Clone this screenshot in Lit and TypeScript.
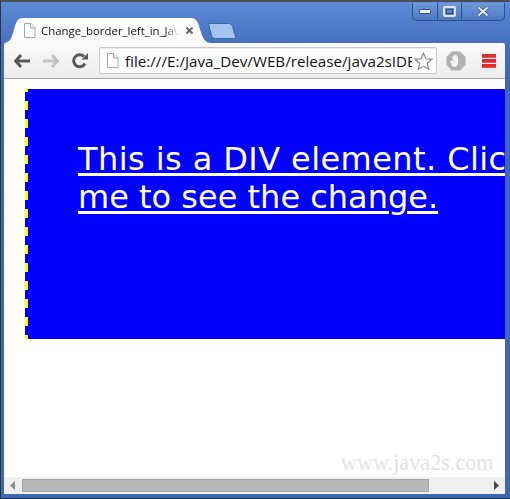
import { LitElement, html, svg, css } from "lit";
import { customElement } from "lit/decorators.js";

@customElement("app-root")
export class AppRoot extends LitElement {
  static styles = css`
    :host { display: block; width: 510px; height: 499px; overflow: hidden; }
    * { box-sizing: border-box; }
    .window {
      width: 510px; height: 499px; display: flex; flex-direction: column;
      padding: 1px 5px 4px 3px;
      border-top: 2px solid #4a4e55; border-left: 1px solid #30343a; border-bottom: 1px solid #20304a;
      background: linear-gradient(#5f8ad6 0, #4470c0 42px, #3c68b4 80px, #3c68b4 100%);
      position: relative;
    }
    .strip { height: 40px; display: flex; align-items: flex-end; flex: none; position: relative; }
    .tab { position: relative; width: 206px; height: 25px; margin-left: 0; display: flex; align-items: center; padding: 0 0 0 19px; flex: none; }
    .tab-bg { position: absolute; left: 0; top: 0; width: 206px; height: 25px; }
    .tab-page { position: relative; width: 13px; height: 15px; flex: none; }
    .tab-title {
      position: relative; font: 11.4px "Open Sans", sans-serif; color: #111; margin-left: 5px; width: 138px;
      white-space: nowrap; overflow: hidden;
      -webkit-mask-image: linear-gradient(to right, #000 124px, transparent 138px);
    }
    .tab-x { position: relative; width: 9px; height: 9px; margin-left: 6px; flex: none; }
    .newtab { width: 34px; height: 16px; margin: 0 0 4px -4px; flex: none; position: relative; }
    .controls {
      position: absolute; right: 0; top: 0; width: 93px; height: 18px; display: flex;
      border: 1px solid #2c5088; border-top: none; border-radius: 0 0 5px 5px;
      background: linear-gradient(#7099da, #4c79c2);
    }
    .ctl { display: flex; align-items: center; justify-content: center; border-right: 1px solid #2c5088; flex: none; }
    .ctl:last-child { border-right: none; flex: 1; }
    .c1 { width: 25px; } .c2 { width: 24px; }
    .toolbar {
      height: 36px; flex: none; display: flex; align-items: center; padding: 0 0 0 10px;
      background: linear-gradient(#fbfbfb, #f1f1f1 60%, #ebebeb);
      border-bottom: 1px solid #a4a4a4; border-radius: 2px 2px 0 0;
    }
    .nav { width: 29px; height: 20px; flex: none; display: flex; align-items: center; }
    .nav.narrow { width: 27px; }
    .omni {
      width: 338px; height: 27px; flex: none; display: flex; align-items: center;
      background: #fff; border: 1px solid #c8c8c8; border-radius: 2px; padding-left: 6px;
      box-shadow: inset 0 1px 1px #eee;
    }
    .omni svg { flex: none; }
    .omni-text { font: 15.2px "Open Sans", sans-serif; color: #111; white-space: nowrap; overflow: hidden; width: 287px; margin-left: 6px; flex: none; }
    .star { margin-left: 2px; }
    .stop { margin-left: 9px; flex: none; }
    .menu { margin-left: 16px; flex: none; width: 14px; display: flex; flex-direction: column; gap: 1px; }
    .menu i { display: block; height: 4px; background: linear-gradient(#e2292b 70%, #ee7070); }
    .view { flex: 1; background: #fff; overflow: hidden; position: relative; min-height: 0; }
    .box {
      width: 580px; height: 250px; margin: 10px 0 0 21px; padding: 51px 50px 0 53px;
      background: linear-gradient(#ff0 0 9px, #00f 9px 18px) 0 -6px / 3px 18px repeat-y, #00f;
      color: #fff; font: 32px/38px "DejaVu Sans", sans-serif;
      text-decoration: underline; text-decoration-thickness: 3px; text-underline-offset: 3px;
    }
    .line1 { letter-spacing: 0.42px; }
    .wm { position: absolute; left: 337px; top: 371px; font: 22.2px "Liberation Serif", serif; color: #e3e3e3; white-space: nowrap; }
    .hbar { height: 17px; flex: none; background: #f0f0f0; display: flex; align-items: center; }
    .arrow { width: 18px; flex: none; display: flex; justify-content: center; }
    .thumb { width: 407px; height: 13px; background: #b8b8b8; border: 1px solid #a6a6a6; flex: none; }
    .track { flex: 1; }
  `;

  render() {
    const page = svg`<path d="M1.500.5h6.500l4 4v10h-10.500z" fill="#fff" stroke="#a8a8a8"/><path d="M7.500.5v4.500h4.500" fill="#eee" stroke="#a8a8a8"/>`;
    return html`
      <div class="window">
        <div class="strip">
          <div class="tab">
            <svg class="tab-bg" viewBox="0 0 206 25">
              <defs><linearGradient id="t" x1="0" y1="0" x2="0" y2="1"><stop offset="0" stop-color="#fff"/><stop offset="1" stop-color="#fafafa"/></linearGradient></defs>
              <path d="M0 25c6-1 7-4 9-10 2-7 3-15 10-15h168c6 0 7 5 9 11 2 7 4 13 10 14z" fill="url(#t)"/>
            </svg>
            <svg class="tab-page" viewBox="0 0 13 15">${page}</svg>
            <span class="tab-title">Change_border_left_in_JavaScript.html</span>
            <svg class="tab-x" viewBox="0 0 9 9"><path d="M1.500 1.500l6 6M7.500 1.500l-6 6" stroke="#666" stroke-width="2"/></svg>
          </div>
          <svg class="newtab" viewBox="0 0 34 16">
            <path d="M2.500 .5h20c2 0 3 1 4 3l3 10c.5 1.500-.5 2-2 2h-18c-2 0-3-1-4-3z" fill="#a4c4f0" stroke="#3c66ac"/>
          </svg>
          <div class="controls">
            <div class="ctl c1"><svg width="13" height="6" viewBox="0 0 13 6"><rect x=".5" y=".5" width="11" height="4" rx="1" fill="#eef3fb" stroke="#2b4a80"/></svg></div>
            <div class="ctl c2"><svg width="13" height="11" viewBox="0 0 13 11"><rect x="1" y="1" width="11" height="9" rx="1" fill="none" stroke="#dfe7f6" stroke-width="2"/><rect x="3.500" y="3.500" width="6" height="4" fill="none" stroke="#2b4a80"/></svg></div>
            <div class="ctl"><svg width="14" height="11" viewBox="0 0 14 11"><path d="M2.500 1.500l9 8M11.500 1.500l-9 8" stroke="#2b4a80" stroke-width="3.400"/><path d="M2.500 1.500l9 8M11.500 1.500l-9 8" stroke="#eef3fb" stroke-width="2"/></svg></div>
          </div>
        </div>
        <div class="toolbar">
          <div class="nav"><svg width="16" height="14" viewBox="0 0 16 14"><path d="M7 1L1.500 7 7 13M2 7h14" fill="none" stroke="#5a5a5a" stroke-width="3"/></svg></div>
          <div class="nav"><svg width="16" height="14" viewBox="0 0 16 14"><path d="M9 1l5.500 6L9 13M14 7H0" fill="none" stroke="#c4c4c4" stroke-width="3"/></svg></div>
          <div class="nav narrow"><svg width="16" height="16" viewBox="0 0 16 16"><path d="M13 10.500A6 6 0 1 1 12 3.500" fill="none" stroke="#5a5a5a" stroke-width="3"/><path d="M9.500 6.500H16V0z" fill="#5a5a5a"/></svg></div>
          <div class="omni">
            <svg width="13" height="15" viewBox="0 0 13 15">${page}</svg>
            <span class="omni-text">file:///E:/Java_Dev/WEB/release/java2sIDE/Change_border_left_in_JavaScript.html</span>
            <svg class="star" width="19" height="18" viewBox="0 0 19 18"><path d="M9.500 1l2.400 5.800 6.100.5-4.700 4 1.500 6-5.300-3.200-5.300 3.200 1.500-6-4.700-4 6.100-.5z" fill="#fff" stroke="#8a8a8a" stroke-width="1.200"/></svg>
          </div>
          <svg class="stop" width="20" height="20" viewBox="0 0 20 20">
            <path d="M6 .5h8L19.500 6v8L14 19.500H6L.5 14V6z" fill="#b0b0b0" stroke="#cfcfcf"/>
            <path d="M6.500 10V5.500c0-1 1.400-1 1.400 0V4c0-1 1.400-1 1.400 0v.5c0-1 1.400-1 1.400 0V6c0-1 1.300-1 1.300 0v6c0 2.500-1.300 4-3.300 4-1.700 0-2.500-.8-3.200-2L4.400 11c-.5-1 .8-1.700 1.400-.9z" fill="#f2f2f2"/>
          </svg>
          <div class="menu"><i></i><i></i><i></i></div>
        </div>
        <div class="view">
          <div class="box"><span class="line1">This is a DIV element. Click </span>me to see the change.</div>
          <div class="wm">www.java2s.com</div>
        </div>
        <div class="hbar">
          <div class="arrow"><svg width="6" height="9" viewBox="0 0 6 9"><path d="M5 0v9L0 4.500z" fill="#8c8c8c"/></svg></div>
          <div class="thumb"></div>
          <div class="track"></div>
          <div class="arrow"><svg width="6" height="9" viewBox="0 0 6 9"><path d="M1 0v9l5-4.500z" fill="#444"/></svg></div>
        </div>
      </div>
    `;
  }
}
